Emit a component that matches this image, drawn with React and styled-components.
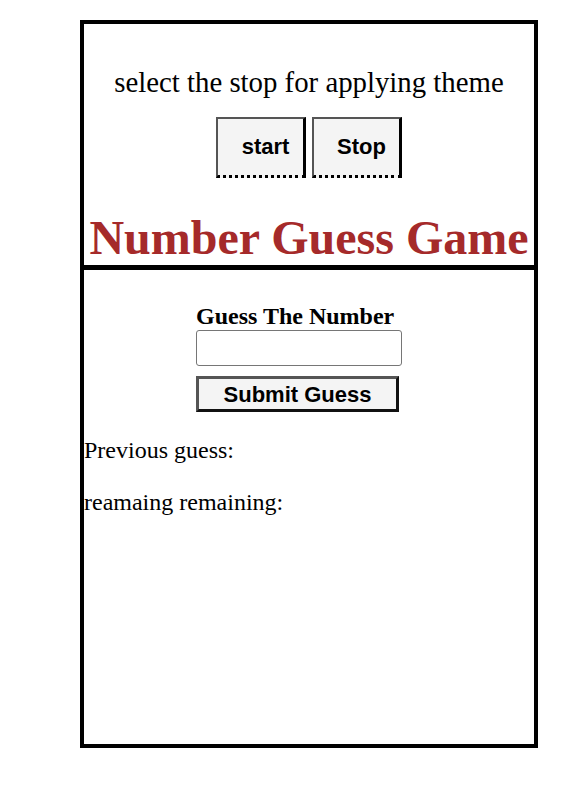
import React from 'react';
import styled, { createGlobalStyle } from 'styled-components';

const GlobalStyle = createGlobalStyle`
  body {
    margin: 0;
    background: #fff;
    font-family: "Liberation Serif", "Times New Roman", serif;
    font-size: 24px;
    color: #000;
  }
`;

const Page = styled.div`
  padding: 20px 0 0 80px;
`;

const Frame = styled.div`
  width: 458px;
  height: 728px;
  box-sizing: border-box;
  border: 4px solid #000;
  display: flex;
  flex-direction: column;
`;

const ThemeSection = styled.div`
  display: flex;
  flex-direction: column;
  align-items: center;
  padding-top: 42px;
  border-bottom: 5px solid #000;
`;

const Prompt = styled.p`
  margin: 0;
  font-size: 1.2em;
  line-height: 33px;
`;

const ButtonRow = styled.div`
  display: flex;
  gap: 6px;
  margin-top: 18px;
`;

const ThemeButton = styled.button`
  width: 90px;
  height: 61px;
  box-sizing: border-box;
  padding: 0 0 0 10px;
  background: #f4f4f4;
  border-style: solid solid dotted solid;
  border-width: 2px 3px 3px 2px;
  border-color: #555 #000 #000 #555;
  font-family: "Liberation Sans", Arial, sans-serif;
  font-weight: bold;
  font-size: 22px;
  color: #000;
`;

const Title = styled.h1`
  margin: 32px 0 0;
  font-size: 48px;
  line-height: 55px;
  color: #a52a2a;
  font-weight: bold;
`;

const GameSection = styled.div`
  flex: 1;
  padding-top: 32px;
`;

const GuessForm = styled.div`
  width: 226px;
  margin: 0 auto;
  display: flex;
  flex-direction: column;
  align-items: flex-start;
`;

const Label = styled.label`
  font-weight: bold;
  line-height: 28px;
`;

const GuessInput = styled.input`
  width: 206px;
  height: 36px;
  box-sizing: border-box;
  border: 1px solid #767676;
  border-radius: 3px;
  padding: 0 4px;
  font-size: 16px;
`;

const SubmitButton = styled.button`
  margin-top: 10px;
  width: 203px;
  height: 36px;
  box-sizing: border-box;
  background: #f4f4f4;
  border: 3px solid;
  border-color: #555 #111 #111 #555;
  font-family: "Liberation Sans", Arial, sans-serif;
  font-weight: bold;
  font-size: 22px;
  color: #000;
  padding: 2px 0 0;
`;

const Info = styled.p`
  margin: 24px 0 0;
  line-height: 28px;
`;

export default function App() {
  return (
    <Page>
      <GlobalStyle />
      <Frame>
        <ThemeSection>
          <Prompt>select the stop for applying theme</Prompt>
          <ButtonRow>
            <ThemeButton>start</ThemeButton>
            <ThemeButton>Stop</ThemeButton>
          </ButtonRow>
          <Title>Number Guess Game</Title>
        </ThemeSection>
        <GameSection>
          <GuessForm>
            <Label htmlFor="guess">Guess The Number</Label>
            <GuessInput id="guess" type="text" />
            <SubmitButton>Submit Guess</SubmitButton>
          </GuessForm>
          <Info>Previous guess:</Info>
          <Info>reamaing remaining:</Info>
        </GameSection>
      </Frame>
    </Page>
  );
}
